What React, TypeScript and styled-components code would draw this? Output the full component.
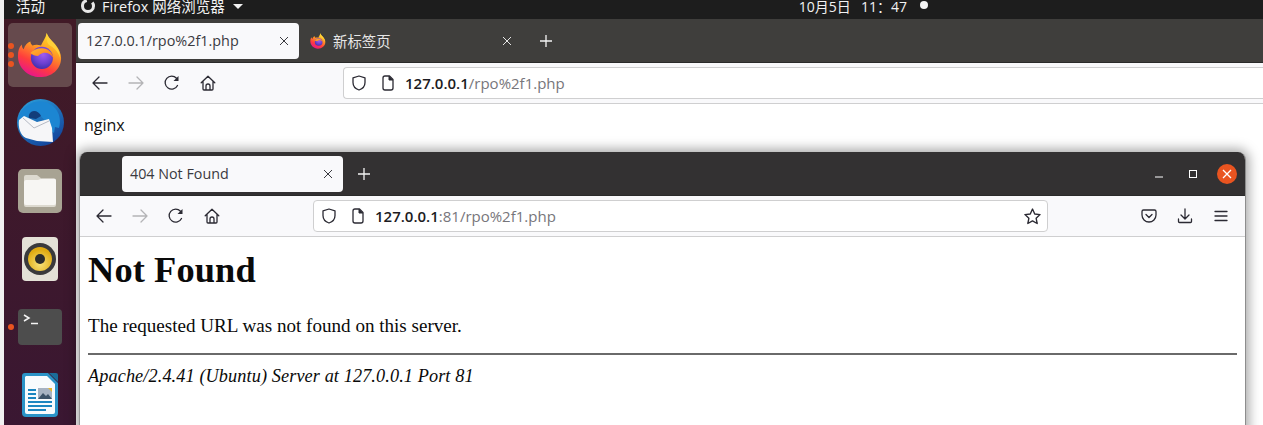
import React from 'react';
import styled, { createGlobalStyle } from 'styled-components';

const Global = createGlobalStyle`
  html, body { margin: 0; padding: 0; width: 1263px; height: 425px; overflow: hidden; background: #fff; }
  #root { width: 1263px; height: 425px; }
  * { box-sizing: border-box; }
`;
const UI = `"Open Sans", "Noto Sans", "Noto Sans CJK SC", sans-serif`;
const Desktop = styled.div`position: relative; width: 1263px; height: 425px; overflow: hidden; display: grid; grid-template-columns: 4px 72px 1fr; grid-template-rows: 19px 1fr; background: #f1f1f1; font-family: ${UI};`;
const TopBar = styled.header`grid-column: 2 / 4; background: #1d1d1d; color: #f2f2f2; font-size: 14.5px; line-height: 14px; display: flex; align-items: flex-start; padding-left: 12px;`;
const TopLabel = styled.span<{ $ml?: number }>`margin-left: ${p => p.$ml ?? 0}px; white-space: nowrap;`;
const Clock = styled.span<{ $ml: number }>`margin-left: ${p => p.$ml}px; white-space: nowrap; font-size: 14px; word-spacing: 1.5px;`;
const RecordDot = styled.span`width: 8px; height: 8px; border-radius: 50%; background: #f4f4f4; margin: 1px 0 0 13px;`;
const MenuArrow = styled.span`width: 0; height: 0; border: 5px solid transparent; border-top: 5px solid #f2f2f2; border-bottom: 0; margin: 4px 0 0 8px;`;
const AppRing = styled.svg`margin: -2px 0 0 35px; flex: none;`;
const Dock = styled.nav`background: linear-gradient(180deg, #411a26 0%, #3a1732 100%); display: flex; flex-direction: column; align-items: center; gap: 4px; padding-top: 4px;`;
const DockItem = styled.div<{ $active?: boolean }>`position: relative; width: 64px; height: 64px; border-radius: 5px; display: flex; align-items: center; justify-content: center; background: ${p => p.$active ? '#664a4d' : 'transparent'}; flex: none;`;
const Pips = styled.div`position: absolute; left: 0; top: 0; bottom: 0; display: flex; flex-direction: column; justify-content: center; gap: 3px;`;
const Pip = styled.i`display: block; width: 6px; height: 6px; border-radius: 50%; background: #e95420;`;
const Main = styled.main`display: flex; flex-direction: column; min-width: 0; background: #fff;`;
const TabStrip = styled.div<{ $win?: boolean }>`display: flex; align-items: center; flex: none; height: 44px; background: ${p => p.$win ? '#333132' : '#3f3e3c'}; padding-left: ${p => p.$win ? 42 : 2}px; border-bottom: 1px solid #2a2a2a;`;
const Tab = styled.div<{ $active?: boolean; $fs?: number }>`width: 221px; height: 36px; flex: none; border-radius: 4px; background: ${p => p.$active ? '#f9f9fb' : 'transparent'}; color: ${p => p.$active ? '#3a3a3f' : '#e6e6e6'}; display: flex; align-items: center; padding: 0 8px; font-size: ${p => p.$fs ?? 14.4}px; white-space: nowrap;`;
const Tab2 = styled(Tab)`padding: 0 6px 0 11px;`;
const TabTitle = styled.span<{ $ml?: number }>`flex: 1; margin-left: ${p => p.$ml ?? 0}px;`;
const TabClose = styled.svg`flex: none; margin-right: 2px;`;
const NewTab = styled.svg<{ $ml: number }>`margin-left: ${p => p.$ml}px; flex: none;`;
const WinControls = styled.div`margin-left: auto; display: flex; align-items: center; padding-right: 8px;`;
const WinBtn = styled.span<{ $close?: boolean }>`width: 20px; height: 20px; margin-left: 14px; border-radius: 50%; background: ${p => p.$close ? '#e95420' : 'transparent'}; display: flex; align-items: center; justify-content: center;`;
const Toolbar = styled.div`height: 41px; flex: none; display: flex; align-items: center; background: #f9f9fb; border-bottom: 1px solid #cfcfd0; padding-left: 6px;`;
const ToolIcon = styled.span`width: 36px; height: 30px; display: flex; align-items: center; justify-content: center; flex: none;`;
const NavIcons = styled.div<{ $w: number }>`display: flex; align-items: center; width: ${p => p.$w}px; flex: none;`;
const UrlBar = styled.div<{ $win?: boolean }>`height: 32px; background: #fff; border: 1px solid #cfcfd0; border-radius: 4px; display: flex; align-items: center; padding-left: 7px; font-size: 15px; color: #77767b; min-width: 0; ${p => p.$win ? 'width: 735px; flex: none;' : 'flex: 1; border-right: 0; border-radius: 4px 0 0 4px;'}`;
const Host = styled.b`font-weight: 600; color: #1c1b22;`;
const UrlText = styled.span`margin-left: 9px; white-space: nowrap; flex: 1;`;
const StarSlot = styled.span`display: flex; margin-right: 6px;`;
const RightTools = styled.div`display: flex; align-items: center; margin-left: 83px;`;
const Nginx = styled.div`padding: 11px 8px; font-size: 16px; line-height: 20px; color: #111;`;
const Win = styled.section`position: absolute; left: 79px; top: 152px; width: 1167px; height: 290px; border-radius: 8px 8px 0 0; overflow: hidden; display: flex; flex-direction: column; background: #fff; box-shadow: 0 0 12px 3px rgba(0,0,0,.35); border-right: 1px solid #8d8d8d; border-left: 1px solid #9a9a9a;`;
const Page = styled.article`padding: 0 8px; color: #0a0a0a; font-family: "Liberation Serif", serif;`;
const H1 = styled.h1`font-size: 36.4px; line-height: 42px; font-weight: 700; margin: 12px 0 0; letter-spacing: .1px;`;
const P = styled.p`font-size: 19.08px; line-height: 22px; margin: 24px 0 0;`;
const Hr = styled.hr`border: 0; border-top: 2px solid #6a6a6a; margin: 16px 0 0; height: 0;`;
const Address = styled.address`font-size: 18.25px; font-style: italic; line-height: 22px; margin-top: 10px; letter-spacing: .1px;`;

const Firefox = ({ s, id }: { s: number; id: string }) => (
  <svg width={s} height={s} viewBox="0 0 48 48">
    <defs>
      <linearGradient id={id + 'a'} x1=".75" y1=".05" x2=".3" y2=".98"><stop offset="0" stopColor="#ffe226" /><stop offset=".35" stopColor="#ff9a24" /><stop offset=".7" stopColor="#ff3d3d" /><stop offset="1" stopColor="#e8158c" /></linearGradient>
      <radialGradient id={id + 'b'} cx=".55" cy=".35" r=".7"><stop offset="0" stopColor="#a25cf0" /><stop offset=".6" stopColor="#6a3fd0" /><stop offset="1" stopColor="#3a2ea8" /></radialGradient>
      <linearGradient id={id + 'c'} x1="0" y1="0" x2="1" y2=".8"><stop offset="0" stopColor="#ffb62e" /><stop offset="1" stopColor="#ff7a1e" /></linearGradient>
    </defs>
    <path d="M31 1c1 5 5 8 9 12 4 5 6 10 6 14 0 12-10 20-22 20C11 47 1 37 1 25c0-5 1-9 4-12 0 3 1 4 2 5 1-4 4-7 7-8 0 2 1 3 2 4 3-1 6-1 9 0 2-4 5-8 6-13z" fill={`url(#${id}a)`} />
    <circle cx="26" cy="27" r="11.5" fill={`url(#${id}b)`} />
    <path d="M14 22c3-3 7-5 12-5 6 0 11 4 12 10-3-4-7-6-11-5-3 1-4 2-5 3-3 0-6-1-8-3z" fill={`url(#${id}c)`} />
    <path d="M31 1c2 6 7 9 10 14 3 4 4 8 4 12-2-7-7-11-12-14-2-3-3-7-2-12z" fill="#ffd13a" />
  </svg>
);

const Thunderbird = () => (
  <svg width="50" height="50" viewBox="0 0 50 50">
    <defs>
      <linearGradient id="tb" x1="0.2" y1="0" x2=".8" y2="1"><stop offset="0" stopColor="#2a9bd8" /><stop offset="1" stopColor="#123f98" /></linearGradient>
    </defs>
    <circle cx="25.500" cy="24.500" r="23.500" fill="url(#tb)" />
    <path d="M13 7c8-6 20-5 27 3 5 6 6 13 4 20l-4-1-1 6-4-3-1 7-2-14-8-9c-3-3-7-3-9-1l-5 5-7 3C3 16 7 11 13 7z" fill="#1c86d2" />
    <path d="M14 20c-1-4 2-7 5-7 3 0 6 2 7 5l-5 3z" fill="#123d7a" />
    <path d="M4 22l5-4 13 6 12-3 3 9 1 14-16-1-11-3C5 37 3 29 4 22z" fill="#f6f6f8" />
    <path d="M8 20l11 10 15-7" fill="none" stroke="#aeb2bd" strokeWidth=".9" strokeLinejoin="round" />
  </svg>
);

const Files = () => (
  <svg width="44" height="44" viewBox="0 0 44 44">
    <rect width="44" height="44" rx="5" fill="#a8a393" />
    <path d="M6 8a2 2 0 0 1 2-2h11l5 4h12a2 2 0 0 1 2 2v24a2 2 0 0 1-2 2H8a2 2 0 0 1-2-2z" fill="#dcd9cf" />
    <path d="M6 13a2 2 0 0 1 2-2h12l4-1.500h12a2 2 0 0 1 2 2V34a2 2 0 0 1-2 2H8a2 2 0 0 1-2-2z" fill="#f7f6f3" />
  </svg>
);

const Rhythmbox = () => (
  <svg width="36" height="44" viewBox="0 0 36 44">
    <defs><radialGradient id="rb" cx=".5" cy=".7" r=".6"><stop offset="0" stopColor="#f8e27a" /><stop offset="1" stopColor="#e0aa10" /></radialGradient></defs>
    <rect width="36" height="44" rx="4" fill="#e4e1d7" />
    <circle cx="18" cy="22" r="16" fill="#3a3a3c" />
    <circle cx="18" cy="22" r="12" fill="url(#rb)" />
    <circle cx="18" cy="22" r="5" fill="#2c2c2c" />
  </svg>
);

const Terminal = () => (
  <svg width="44" height="36" viewBox="0 0 44 36">
    <rect width="44" height="36" rx="4" fill="#4d4d4d" />
    <path d="M6 6l5 3-5 3" fill="none" stroke="#f4f4f4" strokeWidth="1.500" />
    <path d="M13 14.500h7" stroke="#f4f4f4" strokeWidth="1.500" />
  </svg>
);

const Writer = () => (
  <svg width="38" height="46" viewBox="0 0 38 46">
    <path d="M4 1h23l10 10v30a4 4 0 0 1-4 4H5a4 4 0 0 1-4-4V4a3 3 0 0 1 3-3z" fill="#2a93c7" />
    <path d="M5 4h21l8 8v28a2 2 0 0 1-2 2H6a2 2 0 0 1-2-2V5z" fill="#f8fbfd" />
    <path d="M28 1h7a2 2 0 0 1 2 2v7z" fill="#1a6d99" />
    <path d="M7 17h8v2H7zM7 21h8v2H7zM7 25h8v2H7zM7 29h24v2H7zM7 33h24v2H7zM7 37h18v2H7z" fill="#1c86c0" />
    <rect x="17" y="16" width="14" height="11" fill="#a7b3c2" />
    <path d="M17 27l5-6 3 3 2-2 4 5z" fill="#3c5369" />
    <path d="M27 16h4v4z" fill="#e9b82c" />
  </svg>
);

const st = { fill: 'none', stroke: 'currentColor', strokeWidth: 1.3, strokeLinecap: 'round' as const, strokeLinejoin: 'round' as const };
const Back = () => <svg width="16" height="16" viewBox="0 0 16 16" color="#2b2a33"><path d="M1 8h14M7 2L1 8l6 6" {...st} /></svg>;
const Fwd = () => <svg width="16" height="16" viewBox="0 0 16 16" color="#b4b4b6"><path d="M1 8h14M9 2l6 6-6 6" {...st} /></svg>;
const Reload = () => <svg width="16" height="16" viewBox="0 0 16 16" color="#2b2a33"><path d="M13.500 10.500A6.500 6.500 0 1 1 12.500 3.300" {...st} /><path d="M14.500 1v5h-5z" fill="#2b2a33" /></svg>;
const Home = () => <svg width="16" height="16" viewBox="0 0 16 16" color="#2b2a33"><path d="M1.200 7.800L8 1.200l6.800 6.600M3 6.500V14a1 1 0 0 0 1 1h8a1 1 0 0 0 1-1V6.500M6 15v-4a2 2 0 0 1 4 0v4" {...st} /></svg>;
const Shield = () => <svg width="16" height="16" viewBox="0 0 16 16" color="#2b2a33"><path d="M8 1L2 2.800v4.700C2 11.500 5 14 8 15c3-1 6-3.500 6-7.500V2.800z" {...st} /></svg>;
const DocIcon = styled.svg`margin-left: 13px; flex: none;`;
const PageIco = () => <DocIcon width="16" height="16" viewBox="0 0 16 16" color="#2b2a33"><path d="M3 3a2 2 0 0 1 2-2h4.500L13 4.500V13a2 2 0 0 1-2 2H5a2 2 0 0 1-2-2z" {...st} /><path d="M9 1v4h4" fill="#2b2a33" stroke="#2b2a33" /></DocIcon>;
const Star = () => <svg width="17" height="17" viewBox="0 0 16 16" color="#2b2a33"><path d="M8 1l2.100 4.600 5 .6-3.700 3.400 1 5L8 12.100 3.600 14.600l1-5L.9 6.200l5-.6z" {...st} /></svg>;
const Pocket = () => <svg width="16" height="16" viewBox="0 0 16 16" color="#2b2a33"><path d="M2.500 2h11A1.500 1.500 0 0 1 15 3.500V7A7 7 0 0 1 1 7V3.500A1.500 1.500 0 0 1 2.500 2z" {...st} /><path d="M5 6.500l3 3 3-3" {...st} /></svg>;
const Download = () => <svg width="16" height="16" viewBox="0 0 16 16" color="#2b2a33"><path d="M8 1v9M4 7l4 4 4-4M1.500 11v2.500a1 1 0 0 0 1 1h11a1 1 0 0 0 1-1V11" {...st} /></svg>;
const Menu = () => <svg width="16" height="16" viewBox="0 0 16 16" color="#2b2a33"><path d="M2 3.500h12M2 8h12M2 12.500h12" {...st} /></svg>;
const Close = ({ c }: { c: string }) => <TabClose width="10" height="10" viewBox="0 0 10 10" color={c}><path d="M1 1l8 8M9 1l-8 8" fill="none" stroke="currentColor" strokeWidth="1" /></TabClose>;
const Plus = ({ ml }: { ml: number }) => <NewTab $ml={ml} width="12" height="12" viewBox="0 0 12 12"><path d="M6 0v12M0 6h12" stroke="#f4f4f4" strokeWidth="1.300" /></NewTab>;

const Nav = ({ w }: { w: number }) => (
  <NavIcons $w={w}>
    <ToolIcon><Back /></ToolIcon>
    <ToolIcon><Fwd /></ToolIcon>
    <ToolIcon><Reload /></ToolIcon>
    <ToolIcon><Home /></ToolIcon>
  </NavIcons>
);

export default function App() {
  return (
    <Desktop>
      <Global />
      <div />
      <TopBar>
        <TopLabel>活动</TopLabel>
        <AppRing width="16" height="16" viewBox="0 0 16 16"><circle cx="8" cy="8" r="5.500" fill="none" stroke="#e8e8e8" strokeWidth="3" strokeDasharray="24 6" /></AppRing>
        <TopLabel $ml={6}>Firefox 网络浏览器</TopLabel>
        <MenuArrow />
        <Clock $ml={556}>10月5日&nbsp; 11：47</Clock>
        <RecordDot />
      </TopBar>
      <div />
      <Dock>
        <DockItem $active>
          <Pips><Pip /><Pip /><Pip /></Pips>
          <Firefox s={46} id="f1" />
        </DockItem>
        <DockItem><Thunderbird /></DockItem>
        <DockItem><Files /></DockItem>
        <DockItem><Rhythmbox /></DockItem>
        <DockItem><Pips><Pip /></Pips><Terminal /></DockItem>
        <DockItem><Writer /></DockItem>
      </Dock>
      <Main>
        <TabStrip>
          <Tab $active><TabTitle>127.0.0.1/rpo%2f1.php</TabTitle><Close c="#3a3a3f" /></Tab>
          <Tab2>
            <Firefox s={16} id="f2" />
            <TabTitle $ml={7}>新标签页</TabTitle>
            <Close c="#e6e6e6" />
          </Tab2>
          <Plus ml={20} />
        </TabStrip>
        <Toolbar>
          <Nav w={261} />
          <UrlBar><Shield /><PageIco /><UrlText><Host>127.0.0.1</Host>/rpo%2f1.php</UrlText></UrlBar>
        </Toolbar>
        <Nginx>nginx</Nginx>
      </Main>
      <Win>
        <TabStrip $win>
          <Tab $active $fs={14.3}><TabTitle>404 Not Found</TabTitle><Close c="#3a3a3f" /></Tab>
          <Plus ml={15} />
          <WinControls>
            <WinBtn><svg width="10" height="10" viewBox="0 0 10 10"><path d="M1 8h8" stroke="#fff" strokeWidth="1" /></svg></WinBtn>
            <WinBtn><svg width="10" height="10" viewBox="0 0 10 10"><rect x="1.500" y="1.500" width="7" height="7" fill="none" stroke="#fff" strokeWidth="1" /></svg></WinBtn>
            <WinBtn $close><svg width="10" height="10" viewBox="0 0 10 10"><path d="M1 1l8 8M9 1l-8 8" stroke="#fff" strokeWidth="1.300" /></svg></WinBtn>
          </WinControls>
        </TabStrip>
        <Toolbar>
          <Nav w={227} />
          <UrlBar $win>
            <Shield /><PageIco />
            <UrlText><Host>127.0.0.1</Host>:81/rpo%2f1.php</UrlText>
            <StarSlot><Star /></StarSlot>
          </UrlBar>
          <RightTools>
            <ToolIcon><Pocket /></ToolIcon>
            <ToolIcon><Download /></ToolIcon>
            <ToolIcon><Menu /></ToolIcon>
          </RightTools>
        </Toolbar>
        <Page>
          <H1>Not Found</H1>
          <P>The requested URL was not found on this server.</P>
          <Hr />
          <Address>Apache/2.4.41 (Ubuntu) Server at 127.0.0.1 Port 81</Address>
        </Page>
      </Win>
    </Desktop>
  );
}
